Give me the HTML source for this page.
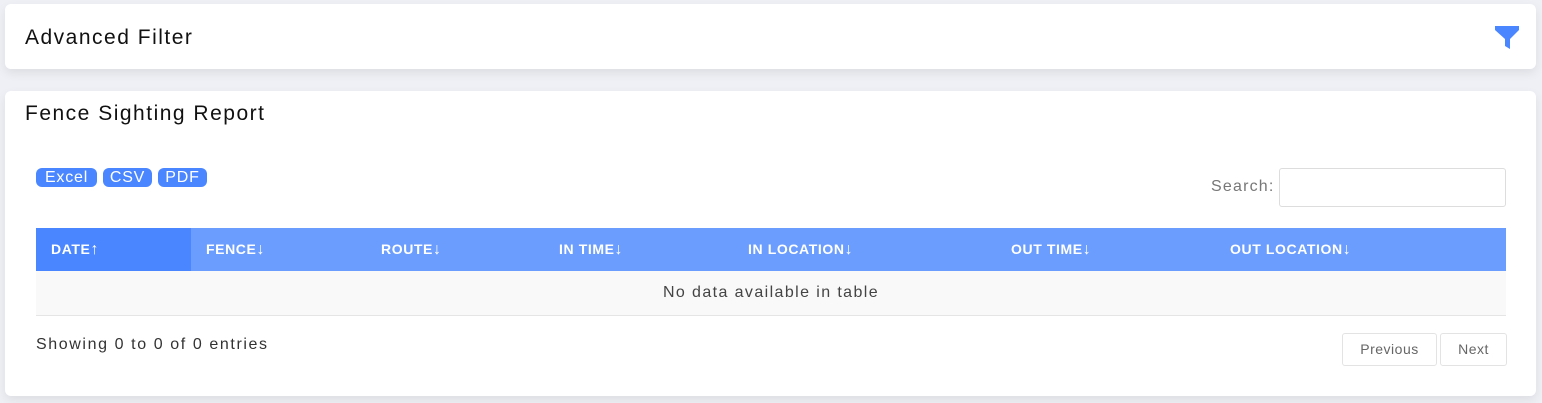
<!DOCTYPE html><html><head><style>
body{margin:0;width:1542px;height:403px;background:#eef0f5;font-family:"Liberation Sans",sans-serif;position:relative;overflow:hidden}
.card{position:absolute;left:5px;width:1531px;background:#fff;border-radius:6px;box-shadow:0 4px 10px rgba(0,0,0,.08)}
.abs{position:absolute}
.btn{position:absolute;top:168px;height:19px;background:#4a86ff;color:#fff;border-radius:6px;font-size:16px;letter-spacing:.8px;line-height:19px;text-align:center}
.pg{position:absolute;top:333px;height:31px;border:1px solid #e3e3e3;border-radius:3px;color:#666;font-size:14px;letter-spacing:.5px;line-height:31px;text-align:center}
.h span{position:absolute;letter-spacing:.6px}
.h b{font-size:16px}
</style></head><body>
<div class="card" style="top:4px;height:65px">
<div class="abs" style="left:20px;top:22px;font-size:21px;letter-spacing:1.5px;color:#111">Advanced Filter</div>
<svg class="abs" style="left:1490px;top:21px" width="24" height="24" viewBox="0 0 24 24"><path d="M0 1H24V5L15 14V24L10 21V14L0 5Z" fill="#4a86ff"/></svg>
</div>
<div class="card" style="top:91px;height:305px">
<div class="abs" style="left:20px;top:11px;font-size:21px;letter-spacing:1.5px;color:#111">Fence Sighting Report</div>
</div>
<div class="btn" style="left:36px;width:61px">Excel</div>
<div class="btn" style="left:103px;width:49px">CSV</div>
<div class="btn" style="left:158px;width:49px">PDF</div>
<div class="abs" style="left:1211px;top:178px;font-size:16px;letter-spacing:1.2px;color:#777">Search:</div>
<div class="abs" style="left:1279px;top:168px;width:225px;height:37px;border:1px solid #ddd;border-radius:3px"></div>
<div class="abs" style="left:36px;top:228px;width:1470px;height:43px;background:#6b9dff">
<div class="abs" style="left:0;top:0;width:155px;height:43px;background:#4a86ff"></div>
</div>
<div class="abs h" style="left:36px;top:228px;width:1470px;height:43px;color:#fff;font-size:14px;font-weight:bold;line-height:43px">
<span style="left:15px">DATE<b>↑</b></span>
<span style="left:170px">FENCE<b>↓</b></span>
<span style="left:345px">ROUTE<b>↓</b></span>
<span style="left:523px">IN TIME<b>↓</b></span>
<span style="left:712px">IN LOCATION<b>↓</b></span>
<span style="left:975px">OUT TIME<b>↓</b></span>
<span style="left:1194px">OUT LOCATION<b>↓</b></span>
</div>
<div class="abs" style="left:36px;top:271px;width:1470px;height:44px;background:#f9f9f9;border-bottom:1px solid #e5e5e5;text-align:center;line-height:44px;font-size:16px;letter-spacing:1.4px;color:#444">No data available in table</div>
<div class="abs" style="left:36px;top:336px;font-size:16px;letter-spacing:1.6px;color:#333">Showing 0 to 0 of 0 entries</div>
<div class="pg" style="left:1342px;width:93px">Previous</div>
<div class="pg" style="left:1440px;width:65px">Next</div>
</body></html>
